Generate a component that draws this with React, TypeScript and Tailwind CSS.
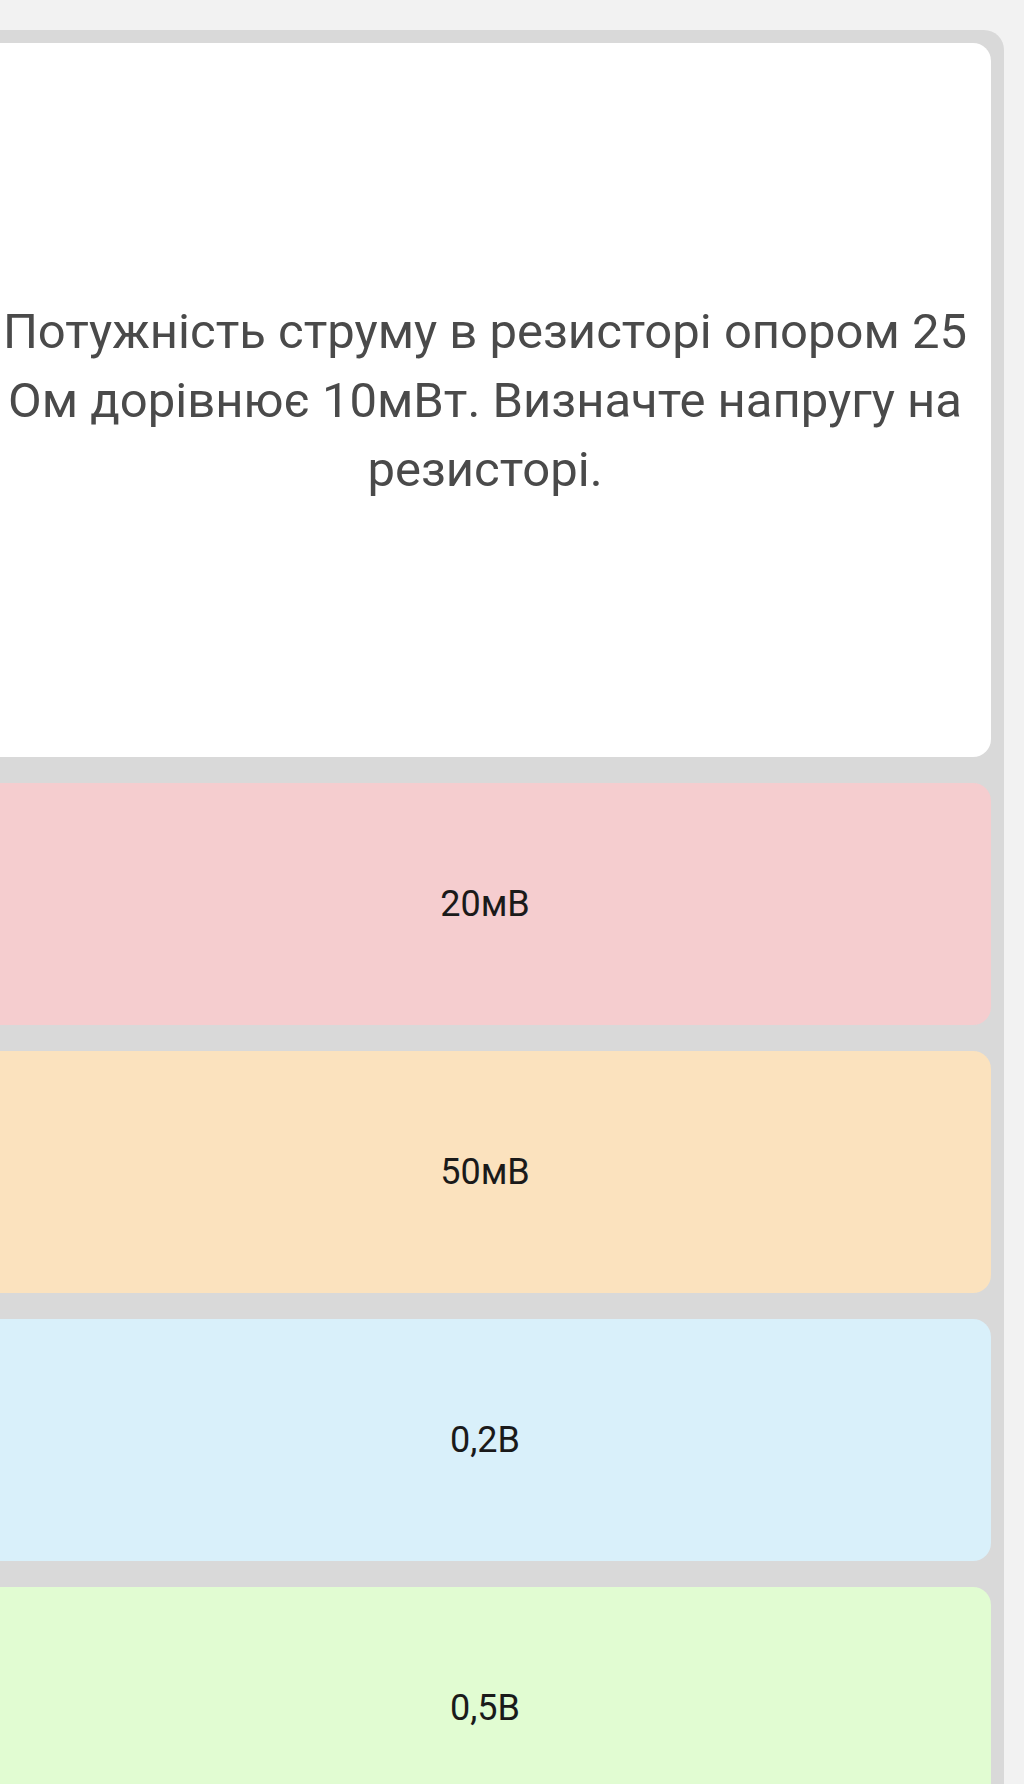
import React from "react";

const answers = [
  { label: "20мВ", bg: "bg-[#f5cdcf]" },
  { label: "50мВ", bg: "bg-[#fbe2be]" },
  { label: "0,2В", bg: "bg-[#d9f0fa]" },
  { label: "0,5В", bg: "bg-[#e1fcd2]" },
];

const App = () => {
  return (
    <div className="bg-[#f2f2f2] h-[1784px] w-[1024px] overflow-hidden pt-[30px] font-['Roboto',sans-serif] antialiased">
      {/* Quiz frame (left edge scrolled off-screen) */}
      <div className="ml-[-34px] w-[1038px] bg-[#d9d9d9] rounded-[20px] p-[13px] flex flex-col gap-[26px]">
        {/* Question card */}
        <div className="h-[714px] bg-white rounded-[18px] px-[18px] flex items-center justify-center">
          <p className="text-center text-[49px] leading-[69px] text-[#4a4a4a]">
            Потужність струму в резисторі опором 25 Ом дорівнює 10мВт.
            Визначте напругу на резисторі.
          </p>
        </div>

        {/* Answer options */}
        {answers.map((a) => (
          <div
            key={a.label}
            className={`h-[242px] rounded-[18px] flex items-center justify-center ${a.bg}`}
          >
            <span className="text-[36px] text-[#1a1a1a]">{a.label}</span>
          </div>
        ))}
      </div>
    </div>
  );
};

export default App;
